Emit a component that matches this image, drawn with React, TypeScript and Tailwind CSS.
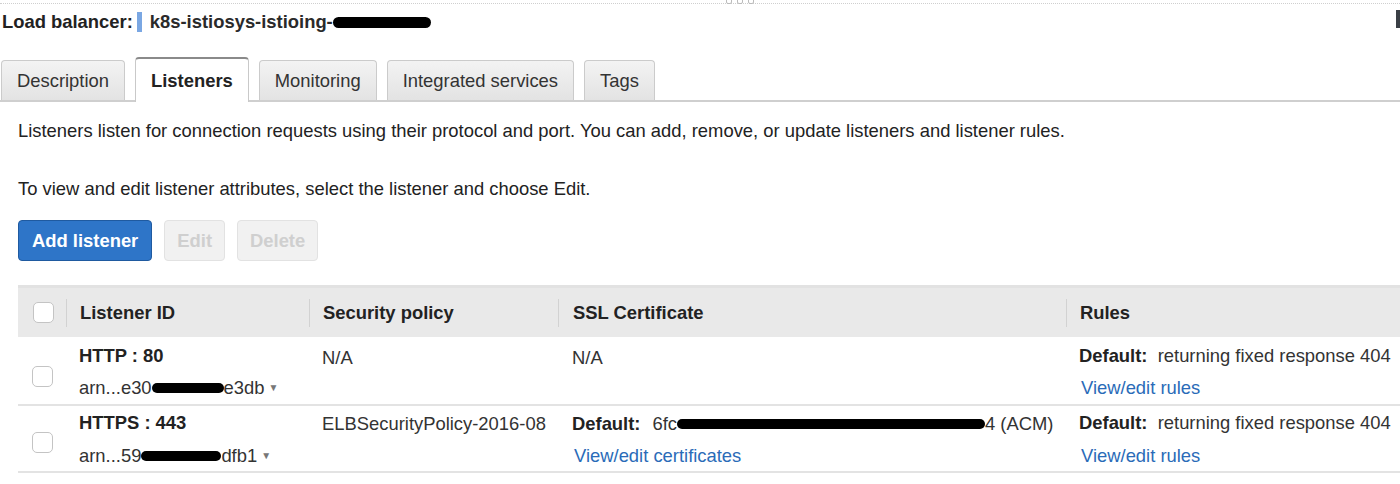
import React from "react";

function Blob({ w, className = "" }: { w: number; className?: string }) {
  return (
    <span
      className={"inline-block h-[10px] shrink-0 rounded-full bg-black align-middle " + className}
      style={{ width: w }}
    />
  );
}

function Check() {
  return <span className="block h-[21px] w-[21px] rounded-[5px] border border-[#c4c4c4] bg-white" />;
}

const tabs = ["Description", "Listeners", "Monitoring", "Integrated services", "Tags"];

export default function App() {
  return (
    <div className="relative h-[484px] w-[1400px] overflow-hidden bg-white font-['Liberation_Sans',Arial,sans-serif] text-[18.4px] text-[#222]">
      <div className="mt-[3px] border-t border-dotted border-[#cfcfcf]" />
      <div className="absolute left-[726px] top-[-2px] flex gap-[5px]">
        <span className="h-[6px] w-[6px] rounded-[2px] border border-[#bbb]" />
        <span className="h-[6px] w-[6px] rounded-[2px] border border-[#bbb]" />
        <span className="h-[6px] w-[6px] rounded-[2px] border border-[#bbb]" />
      </div>
      <div className="absolute right-0 top-[10px] h-[18px] w-[4px] bg-[#3a3f45]" />

      {/* title */}
      <div className="mt-[7px] flex items-center pl-[2px] leading-[22px]">
        <span className="font-bold">Load balancer:</span>
        <span className="ml-[4px] inline-block h-[20px] w-[5px] bg-[#7aa7e3]" />
        <span className="ml-[8px] font-bold text-[#2a2a2a]">k8s-istiosys-istioing-</span>
        <Blob w={98} className="h-[11px]" />
      </div>

      {/* tabs */}
      <div className="mt-[24px] flex items-end gap-[10px] border-b-2 border-[#cfcfcf] pl-[1px]">
        {tabs.map((t) =>
          t === "Listeners" ? (
            <div
              key={t}
              className="-mb-[2px] flex h-[45px] items-center rounded-t-[4px] border border-b-0 border-t-2 border-[#c9c9c9] border-t-[#8a8a8a] bg-white px-[15px] font-bold"
            >
              {t}
            </div>
          ) : (
            <div
              key={t}
              className="flex h-[40px] items-center rounded-t-[4px] border border-b-0 border-[#cbcbcb] bg-gradient-to-b from-[#f3f3f3] to-[#e3e3e3] px-[15px] text-[#333]"
            >
              {t}
            </div>
          )
        )}
      </div>

      <div className="pl-[18px]">
        <p className="mt-[18px] leading-[22px]">
          Listeners listen for connection requests using their protocol and port. You can add, remove, or update listeners and listener rules.
        </p>
        <p className="mt-[36px] leading-[22px]">
          To view and edit listener attributes, select the listener and choose Edit.
        </p>

        {/* buttons */}
        <div className="mt-[20px] flex gap-[12px]">
          <button className="h-[41px] rounded-[4px] border border-[#1f5aa0] bg-[#2e75c8] px-[13px] font-bold text-white">
            Add listener
          </button>
          <button className="h-[41px] rounded-[4px] border border-[#e2e2e2] bg-[#f1f1f1] px-[12px] font-bold text-[#cfcfcf]">
            Edit
          </button>
          <button className="h-[41px] rounded-[4px] border border-[#e2e2e2] bg-[#f1f1f1] px-[12px] font-bold text-[#cfcfcf]">
            Delete
          </button>
        </div>

        {/* table */}
        <div className="mt-[24px] w-[1400px]">
          <div className="flex h-[52px] items-center border-t-[3px] border-[#e2e2e2] bg-[#e9e9e9] font-bold text-[#222]">
            <div className="flex w-[48px] justify-center pl-[2px]">
              <Check />
            </div>
            <div className="flex h-[28px] w-[243px] items-center border-l border-[#d2d2d2] pl-[13px]">Listener ID</div>
            <div className="flex h-[28px] w-[249px] items-center border-l border-[#d2d2d2] pl-[13px]">Security policy</div>
            <div className="flex h-[28px] w-[508px] items-center border-l border-[#d2d2d2] pl-[14px]">SSL Certificate</div>
            <div className="flex h-[28px] flex-1 items-center border-l border-[#d2d2d2] pl-[13px]">Rules</div>
          </div>

          {/* row 1 */}
          <div className="flex h-[69px] border-b-2 border-[#e3e3e3] leading-[22px] text-[#333]">
            <div className="flex w-[48px] items-center justify-center pt-[12px]">
              <Check />
            </div>
            <div className="w-[243px] pl-[13px] pt-[8px]">
              <div className="font-bold text-[#222]">HTTP : 80</div>
              <div className="mt-[10px] flex items-center whitespace-nowrap">
                arn...e30
                <Blob w={72} className="h-[9px]" />
                e3db
                <span className="ml-[4px] text-[10px] text-[#777]">▼</span>
              </div>
            </div>
            <div className="w-[249px] pl-[13px] pt-[10px]">N/A</div>
            <div className="w-[508px] pl-[14px] pt-[10px]">N/A</div>
            <div className="flex-1 whitespace-nowrap pl-[13px] pt-[8px]">
              <div>
                <span className="font-bold text-[#222]">Default:</span>&nbsp; returning fixed response 404
              </div>
              <div className="mt-[10px] pl-[2px] text-[#2a6bb8]">View/edit rules</div>
            </div>
          </div>

          {/* row 2 */}
          <div className="flex h-[67px] border-b-2 border-[#e3e3e3] leading-[22px] text-[#333]">
            <div className="flex w-[48px] items-center justify-center pt-[8px]">
              <Check />
            </div>
            <div className="w-[243px] pl-[13px] pt-[6px]">
              <div className="font-bold text-[#222]">HTTPS : 443</div>
              <div className="mt-[11px] flex items-center whitespace-nowrap">
                arn...59
                <Blob w={80} className="h-[9px]" />
                dfb1
                <span className="ml-[4px] text-[10px] text-[#777]">▼</span>
              </div>
            </div>
            <div className="w-[249px] whitespace-nowrap pl-[13px] pt-[7px]">ELBSecurityPolicy-2016-08</div>
            <div className="w-[508px] pl-[14px] pt-[7px]">
              <div className="flex items-center whitespace-nowrap">
                <span className="font-bold text-[#222]">Default:</span>
                <span className="ml-[12px]">6fc</span>
                <Blob w={308} className="h-[9px]" />
                <span>4 (ACM)</span>
              </div>
              <div className="mt-[10px] pl-[2px] text-[#2a6bb8]">View/edit certificates</div>
            </div>
            <div className="flex-1 whitespace-nowrap pl-[13px] pt-[6px]">
              <div>
                <span className="font-bold text-[#222]">Default:</span>&nbsp; returning fixed response 404
              </div>
              <div className="mt-[11px] pl-[2px] text-[#2a6bb8]">View/edit rules</div>
            </div>
          </div>
        </div>
      </div>
    </div>
  );
}
